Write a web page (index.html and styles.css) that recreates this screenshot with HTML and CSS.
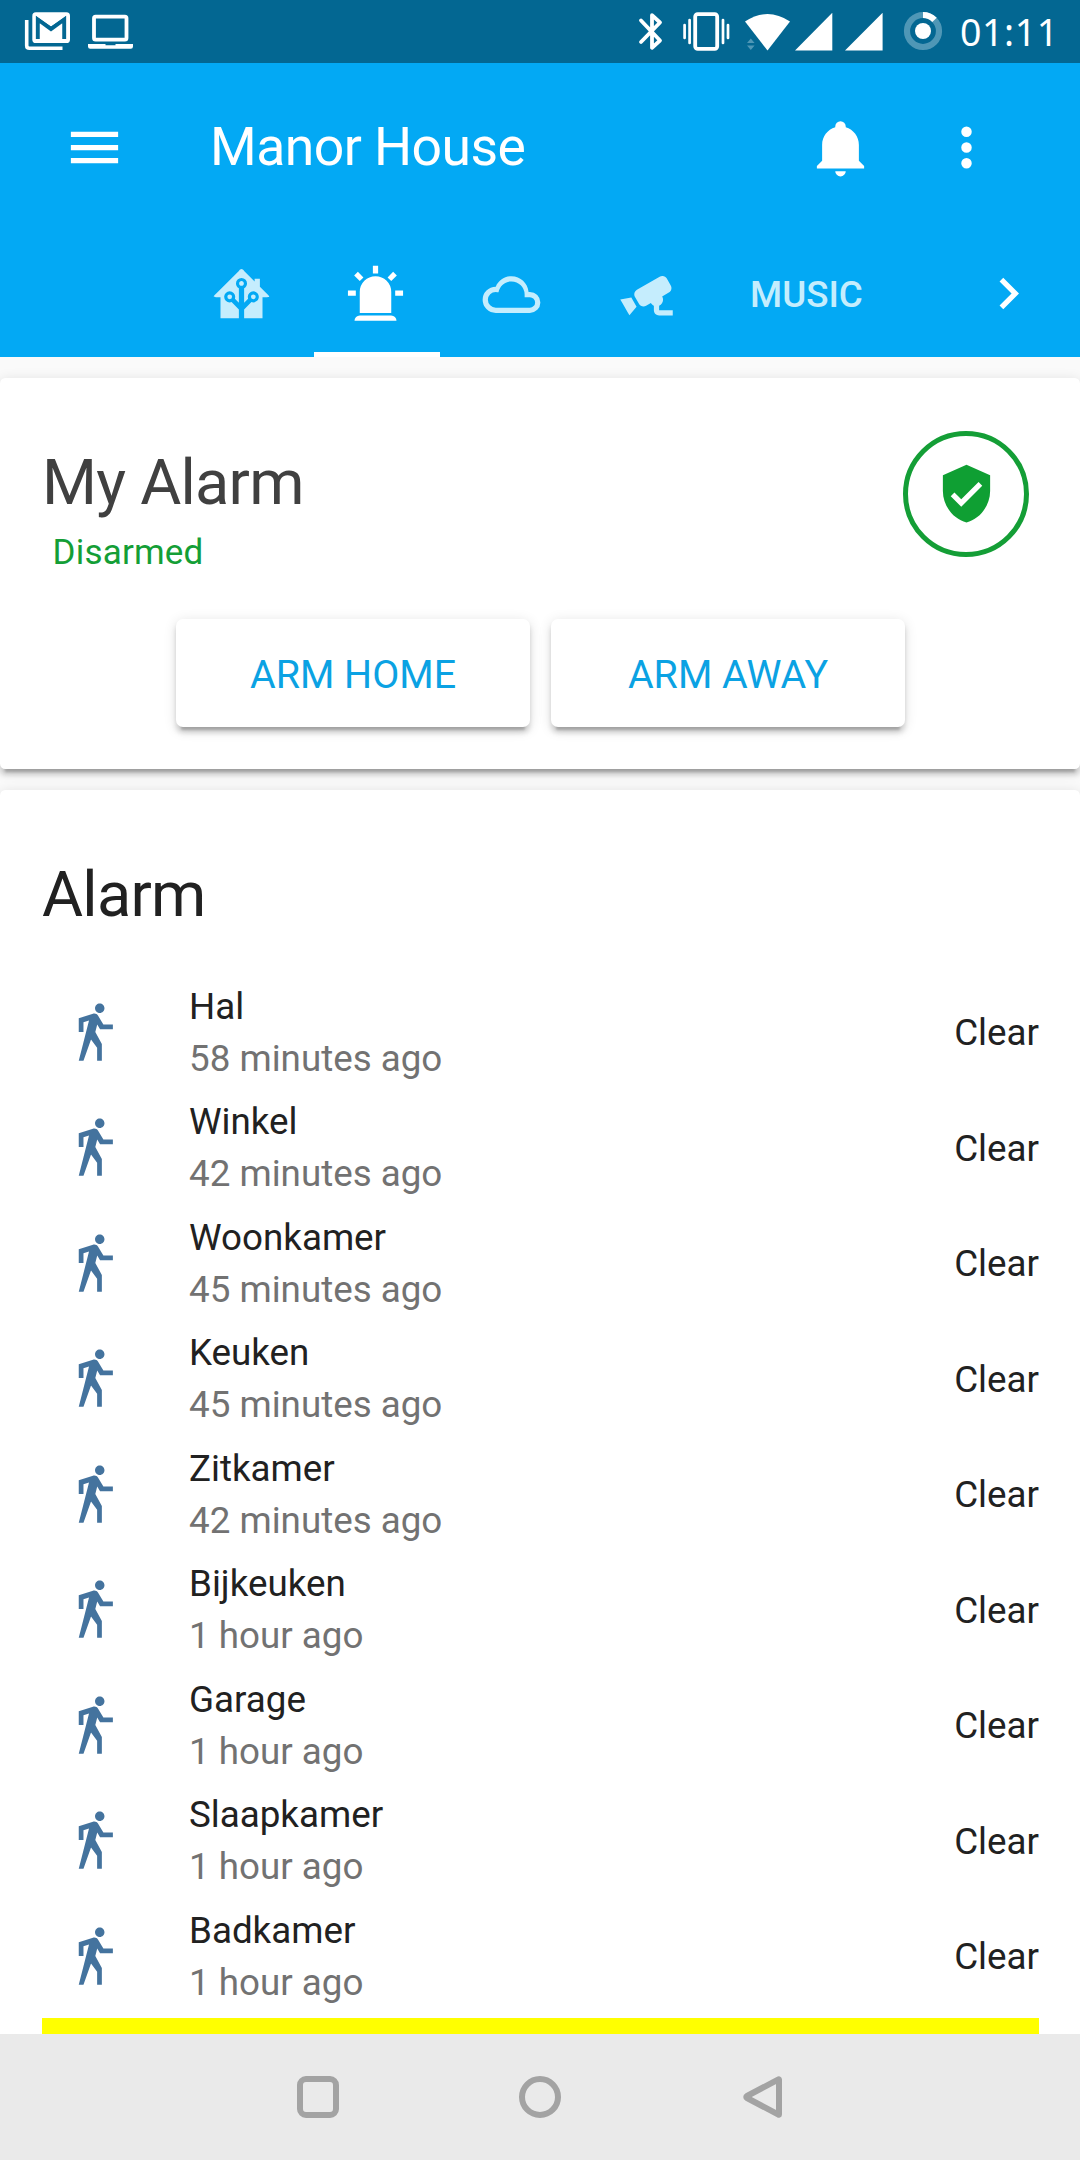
FILE: index.html
```html
<!DOCTYPE html>
<html lang="en">
<head>
<meta charset="utf-8">
<title>Manor House</title>
<link rel="stylesheet" href="styles.css">
</head>
<body>
<svg class="defs" aria-hidden="true">
  <symbol id="walk" viewBox="0 0 24 24"><path d="M14.12,10H19V8.2H15.38L13.38,4.87C13.08,4.37 12.54,4.03 11.92,4.03C11.74,4.03 11.58,4.06 11.42,4.11L6,5.8V11H7.8V7.33L9.91,6.67L6,22H7.8L10.67,13.89L13,17V22H14.8V15.59L12.31,11.05L13.04,8.18M14,3.8C15,3.8 15.8,3 15.8,2C15.8,1 15,0.2 14,0.2C13,0.2 12.2,1 12.2,2C12.2,3 13,3.8 14,3.8Z"/></symbol>
</svg>

<header class="status">
  <svg class="status-left" viewBox="0 0 140 63">
    <path d="M26.7 20V45.5Q26.7 48.3 29.5 48.3H62.5" fill="none" stroke="#fff" stroke-width="3.6"/>
    <rect x="32.3" y="12.3" width="37.7" height="30.7" rx="3.6" fill="#fff"/>
    <path d="M37.8 39V19.5L51 29L64.2 19.5V39" fill="none" stroke="#036792" stroke-width="3.9"/>
    <path d="M36 16.2L51 26.5L66 16.2V19L51 29L36 19Z" fill="#036792"/>
    <rect x="94" y="16.6" width="32.5" height="23" rx="1.6" fill="none" stroke="#fff" stroke-width="3.8"/>
    <path d="M88 44H105.5V45.2H115.5V44H133V46.5Q133 48.7 130.8 48.7H90.2Q88 48.7 88 46.5Z" fill="#fff"/>
  </svg>
  <div class="status-right">
    <svg class="status-icons" viewBox="630 0 320 63">
      <path d="M641 20.5L660 40.5L652 47.8V15.2L660 22.5L641 42" fill="none" stroke="#fff" stroke-width="3.8" stroke-linecap="round" stroke-linejoin="round"/>
      <rect x="695.2" y="14.2" width="22" height="34.6" rx="2.5" fill="none" stroke="#fff" stroke-width="3.8"/>
      <path d="M684.6 25V38M689.6 20V43M723 20V43M728 25V38" stroke="#fff" stroke-width="2.7" stroke-linecap="round"/>
      <path d="M745 21.5Q767.5 6.5 790 21.5L767.5 50.5Z" fill="#fff"/>
      <path d="M747 43L750.8 38.5L754.6 43ZM747 45.5H754.6L750.8 50Z" fill="#4f97b6"/>
      <path d="M832.3 12.7V50.5H795ZM882.6 12.7V50.5H845Z" fill="#fff"/>
      <circle cx="923" cy="31" r="16" fill="none" stroke="#4f97b6" stroke-width="6.2"/>
      <path d="M923 15A16 16 0 0 1 934.5 19.9" fill="none" stroke="#fff" stroke-width="6.2"/>
      <circle cx="923" cy="31" r="8" fill="#fff"/>
    </svg>
    <span class="clock">01:11</span>
  </div>
</header>

<div class="appbar">
  <div class="toolbar">
    <svg class="icon" viewBox="0 0 24 24"><path d="M3,6H21V8H3V6M3,11H21V13H3V11M3,16H21V18H3V16Z"/></svg>
    <h1 class="title">Manor House</h1>
    <svg class="icon" viewBox="0 0 24 24"><path d="M21,19V20H3V19L5,17V11C5,7.9 7.03,5.17 10,4.29C10,4.19 10,4.1 10,4A2,2 0 0,1 12,2A2,2 0 0,1 14,4C14,4.1 14,4.19 14,4.29C16.97,5.17 19,7.9 19,11V17L21,19M14,21A2,2 0 0,1 12,23A2,2 0 0,1 10,21"/></svg>
    <svg class="icon" viewBox="0 0 24 24"><path d="M12,16A2,2 0 0,1 14,18A2,2 0 0,1 12,20A2,2 0 0,1 10,18A2,2 0 0,1 12,16M12,10A2,2 0 0,1 14,12A2,2 0 0,1 12,14A2,2 0 0,1 10,12A2,2 0 0,1 12,10M12,4A2,2 0 0,1 14,6A2,2 0 0,1 12,8A2,2 0 0,1 10,6A2,2 0 0,1 12,4Z"/></svg>
  </div>
  <nav class="tabs">
    <a class="tab"><svg class="icon" viewBox="0 0 24 24"><path d="M21.8,13H20V21H13V17.67L15.79,14.88L16.5,15C17.66,15 18.6,14.06 18.6,12.9C18.6,11.74 17.66,10.8 16.5,10.8A2.1,2.1 0 0,0 14.4,12.9L14.5,13.61L13,15.13V9.65C13.66,9.29 14.1,8.6 14.1,7.8A2.1,2.1 0 0,0 12,5.7A2.1,2.1 0 0,0 9.9,7.8C9.9,8.6 10.34,9.29 11,9.65V15.13L9.5,13.61L9.6,12.9A2.1,2.1 0 0,0 7.5,10.8A2.1,2.1 0 0,0 5.4,12.9A2.1,2.1 0 0,0 7.5,15L8.21,14.88L11,17.67V21H4V13H2.25C1.83,13 1.42,13 1.42,12.79C1.43,12.57 1.85,12.15 2.28,11.72L11,3C11.33,2.67 11.67,2.33 12,2.33C12.33,2.33 12.67,2.67 13,3L17,7V6H19V9L21.78,11.78C22.18,12.18 22.59,12.59 22.6,12.8C22.6,13 22.2,13 21.8,13M7.5,12A0.9,0.9 0 0,1 8.4,12.9A0.9,0.9 0 0,1 7.5,13.8A0.9,0.9 0 0,1 6.6,12.9A0.9,0.9 0 0,1 7.5,12M16.5,12C17,12 17.4,12.4 17.4,12.9C17.4,13.4 17,13.8 16.5,13.8A0.9,0.9 0 0,1 15.6,12.9A0.9,0.9 0 0,1 16.5,12M12,6.9C12.5,6.9 12.9,7.3 12.9,7.8C12.9,8.3 12.5,8.7 12,8.7C11.5,8.7 11.1,8.3 11.1,7.8C11.1,7.3 11.5,6.9 12,6.9Z"/></svg></a>
    <a class="tab selected"><svg class="icon" viewBox="0 0 24 24"><path d="M6,6.9L3.87,4.78L5.28,3.37L7.4,5.5L6,6.9M13,1V4H11V1H13M20.13,4.78L18,6.9L16.6,5.5L18.72,3.37L20.13,4.78M4.5,10.5V12.5H1.5V10.5H4.5M19.5,10.5H22.5V12.5H19.5V10.5M6,20H18A2,2 0 0,1 20,22H4A2,2 0 0,1 6,20M12,5A6,6 0 0,1 18,11V19H6V11A6,6 0 0,1 12,5Z"/></svg></a>
    <a class="tab"><svg class="icon" viewBox="0 0 24 24"><path d="M6,19A5,5 0 0,1 1,14A5,5 0 0,1 6,9C7,6.65 9.3,5 12,5C15.43,5 18.24,7.66 18.5,11.03L19,11A4,4 0 0,1 23,15A4,4 0 0,1 19,19H6M19,13H17V12A5,5 0 0,0 12,7C9.5,7 7.45,8.82 7.06,11.19C6.73,11.07 6.37,11 6,11A3,3 0 0,0 3,14A3,3 0 0,0 6,17H19A2,2 0 0,0 21,15A2,2 0 0,0 19,13Z"/></svg></a>
    <a class="tab"><svg class="icon" viewBox="0 0 24 24"><path d="M18.15,4.94C17.77,4.91 17.37,5 17,5.2L8.35,10.2C7.39,10.76 7.07,12 7.62,12.94L9.12,15.53C9.67,16.5 10.89,16.82 11.85,16.27L13.65,15.23C13.92,15.69 14.32,16.06 14.81,16.27V18.04C14.81,19.13 15.7,20 16.81,20H22V18.04H16.81V16.27C17.72,15.87 18.31,14.97 18.31,14C18.31,13.54 18.19,13.11 17.97,12.73L20.5,11.27C21.47,10.71 21.8,9.5 21.24,8.53L19.74,5.94C19.4,5.34 18.79,5 18.15,4.94M6.22,13.17L2,13.87L2.75,15.17L4.75,18.63L5.5,19.93L8.22,16.63L6.22,13.17Z"/></svg></a>
    <a class="tab tab-text">MUSIC</a>
    <svg class="icon next" viewBox="0 0 24 24"><path d="M10 6L8.59 7.41 13.17 12l-4.58 4.59L10 18l6-6z"/></svg>
  </nav>
</div>

<main class="view">
  <section class="card panel">
    <div class="panel-head">
      <div>
        <h2 class="heading">My Alarm</h2>
        <div class="state">Disarmed</div>
      </div>
      <div class="badge"><svg class="icon" viewBox="0 0 24 24"><path d="M10,17L6,13L7.41,11.59L10,14.17L16.59,7.58L18,9M12,1L3,5V11C3,16.55 6.84,21.74 12,23C17.16,21.74 21,16.55 21,11V5L12,1Z"/></svg></div>
    </div>
    <div class="actions">
      <button class="btn">ARM HOME</button>
      <button class="btn">ARM AWAY</button>
    </div>
  </section>

  <section class="card sensors">
    <h2 class="heading">Alarm</h2>
    <ul class="rows">
      <li class="row"><svg class="icon"><use href="#walk"/></svg><div class="info"><div>Hal</div><div class="ago">58 minutes ago</div></div><span>Clear</span></li>
      <li class="row"><svg class="icon"><use href="#walk"/></svg><div class="info"><div>Winkel</div><div class="ago">42 minutes ago</div></div><span>Clear</span></li>
      <li class="row"><svg class="icon"><use href="#walk"/></svg><div class="info"><div>Woonkamer</div><div class="ago">45 minutes ago</div></div><span>Clear</span></li>
      <li class="row"><svg class="icon"><use href="#walk"/></svg><div class="info"><div>Keuken</div><div class="ago">45 minutes ago</div></div><span>Clear</span></li>
      <li class="row"><svg class="icon"><use href="#walk"/></svg><div class="info"><div>Zitkamer</div><div class="ago">42 minutes ago</div></div><span>Clear</span></li>
      <li class="row"><svg class="icon"><use href="#walk"/></svg><div class="info"><div>Bijkeuken</div><div class="ago">1 hour ago</div></div><span>Clear</span></li>
      <li class="row"><svg class="icon"><use href="#walk"/></svg><div class="info"><div>Garage</div><div class="ago">1 hour ago</div></div><span>Clear</span></li>
      <li class="row"><svg class="icon"><use href="#walk"/></svg><div class="info"><div>Slaapkamer</div><div class="ago">1 hour ago</div></div><span>Clear</span></li>
      <li class="row"><svg class="icon"><use href="#walk"/></svg><div class="info"><div>Badkamer</div><div class="ago">1 hour ago</div></div><span>Clear</span></li>
    </ul>
    <div class="warning"></div>
  </section>
</main>

<footer class="sysnav">
  <svg class="navkey" viewBox="0 0 48 48"><rect x="6" y="6" width="36" height="36" rx="6"/></svg>
  <svg class="navkey" viewBox="0 0 48 48"><circle cx="24" cy="24" r="18"/></svg>
  <svg class="navkey" viewBox="0 0 48 48"><path d="M41 6.500V41.500Q41 42 40.500 41.700L9 25Q7.500 24 9 23L40.500 6.300Q41 6 41 6.500Z"/></svg>
</footer>
</body>
</html>
```
FILE: styles.css
```css
* { box-sizing: border-box; }

body {
  margin: 0;
  width: 1080px;
  height: 2160px;
  display: flex;
  flex-direction: column;
  overflow: hidden;
  background: #fafafa;
  color: #212121;
  font-family: Roboto, sans-serif;
  font-size: 36.75px;
}

h1, h2, ul { margin: 0; padding: 0; font-weight: 400; list-style: none; }

.defs { display: none; }

.icon {
  width: 63px;
  height: 63px;
  flex: none;
  display: block;
  fill: currentColor;
}

/* System status bar */
.status {
  height: 63px;
  flex: none;
  display: flex;
  justify-content: space-between;
  background: #036792;
  color: #fff;
}
.status-left { width: 140px; height: 63px; }
.status-right { display: flex; padding-right: 24px; }
.status-icons { width: 320px; height: 63px; }
.clock {
  width: 106px;
  padding-left: 10px;
  font: 37.5px/64px "Noto Sans", sans-serif;
  letter-spacing: .6px;
  white-space: nowrap;
}

/* App header */
.appbar {
  height: 294px;
  flex: none;
  background: #03a9f4;
  color: #fff;
}
.toolbar {
  height: 168px;
  display: flex;
  align-items: center;
  gap: 63px;
  padding: 0 82.5px 0 63px;
}
.title {
  flex: 1;
  padding-left: 21px;
  font-size: 53.5px;
  line-height: 62px;
  letter-spacing: -.55px;
}
.tabs {
  height: 126px;
  display: flex;
  gap: 9px;
  padding: 0 40.5px 0 178.5px;
}
.tab {
  width: 126px;
  display: flex;
  align-items: center;
  justify-content: center;
  color: #c5edfd;
  border-bottom: 5.25px solid transparent;
  border-top: 5.25px solid transparent;
}
.selected { color: #fff; border-bottom-color: #fff; }
.selected .icon { margin-left: -2px; }
.tab-text { width: auto; padding: 0 31.5px; font-weight: 500; }
.next { margin: 31px 0 0 auto; }

/* Cards */
.view {
  flex: 1;
  min-height: 0;
  overflow: hidden;
  display: flex;
  flex-direction: column;
  gap: 21px;
  padding-top: 21px;
}
.card {
  flex: none;
  background: #fff;
  border-radius: 5.25px;
  box-shadow: 0 5.25px 5.25px rgba(0, 0, 0, .14),
    0 2.6px 13px rgba(0, 0, 0, .12),
    0 7.9px 2.6px -5.25px rgba(0, 0, 0, .2);
}
.heading {
  font-size: 63px;
  line-height: 84px;
  letter-spacing: -.012em;
}

.panel { height: 391px; }
.panel-head {
  height: 241px;
  display: flex;
  justify-content: space-between;
  padding: 52px 51px 0 42px;
}
.panel-head .heading { margin-top: 11px; color: #404040; }
.state {
  padding-left: 10.5px;
  margin-top: 7px;
  line-height: 42px;
  font-size: 35px;
  letter-spacing: .2px;
  color: #149e36;
}
.badge {
  width: 126px;
  height: 126px;
  margin-top: .5px;
  display: flex;
  align-items: center;
  justify-content: center;
  border: 5.25px solid #149e36;
  border-radius: 50%;
  color: #0f9f33;
}
.actions { display: flex; justify-content: center; gap: 21px; padding-left: 1px; }
.btn {
  width: 354px;
  height: 108px;
  padding: 3px 0 0;
  border: 0;
  border-radius: 7px;
  background: #fff;
  color: #0ba2e3;
  font: 39.4px Roboto, sans-serif;
  box-shadow: 0 5.25px 5.25px rgba(0, 0, 0, .14),
    0 2.6px 13px rgba(0, 0, 0, .12),
    0 7.9px 2.6px -5.25px rgba(0, 0, 0, .2);
}

.sensors { padding: 63px 41px 0 42px; }
.rows {
  display: flex;
  flex-direction: column;
  gap: 10.5px;
  padding-top: 43px;
}
.row {
  height: 105px;
  display: flex;
  align-items: center;
  padding-left: 21px;
}
.row .icon { margin-top: 3px; color: #44739e; }
.info { flex: 1; padding-left: 63px; line-height: 52px; }
.ago { color: #727272; }
.warning { height: 42px; margin-top: 9px; background: #ff0; }

/* System navigation keys */
.sysnav {
  height: 126px;
  flex: none;
  display: flex;
  justify-content: center;
  gap: 174px;
  padding-top: 39px;
  background: #eaeaea;
}
.navkey {
  width: 48px;
  height: 48px;
  fill: none;
  stroke: #a3a3a3;
  stroke-width: 6;
  stroke-linejoin: round;
}
```
